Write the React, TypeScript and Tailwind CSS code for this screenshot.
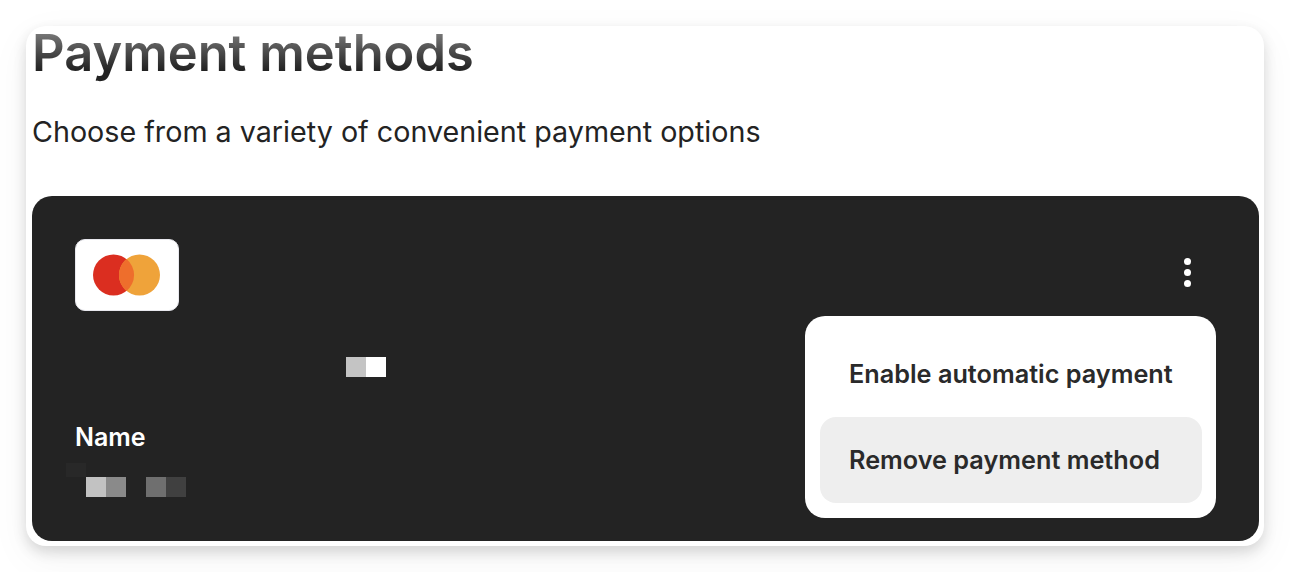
export default function App() {
  return (
    <div className="h-[572px] w-[1290px] overflow-hidden bg-white pt-[26px] pl-[26px] font-['Inter',sans-serif]">
      <div className="h-[520px] w-[1238px] rounded-[20px] bg-white pr-[5px] pb-[5px] pl-[6px] shadow-[0_6px_14px_rgba(0,0,0,0.14),0_12px_40px_rgba(0,0,0,0.05)]">
        <h1 className="h-[56px] w-fit bg-gradient-to-b from-[#8a8a8a] to-[#222222] to-[80%] bg-clip-text text-[50.6px] leading-[54px] font-semibold text-transparent">
          Payment methods
        </h1>
        <p className="mt-[32px] text-[28.7px] leading-[36px] text-[#232323]">
          Choose from a variety of convenient payment options
        </p>
        <div className="relative mt-[46px] h-[345px] rounded-[20px] bg-[#232323] pt-[43px] pl-[43px]">
          <div className="flex h-[72px] w-[104px] items-center rounded-[10px] border border-[#e8e8ee] bg-white pl-[17px]">
            <svg width="68" height="42" viewBox="0 0 68 42">
              <circle cx="20.5" cy="21" r="20.5" fill="#db2e20" />
              <circle cx="46.5" cy="21" r="20.5" fill="#efa33a" />
              <path d="M33.5 5.1a20.5 20.5 0 0 1 0 31.8a20.5 20.5 0 0 1 0-31.8z" fill="#ee6e2c" />
            </svg>
          </div>
          <div className="absolute top-[161px] left-[314px] flex">
            <div className="h-[20px] w-[20px] bg-[#c4c4c4]" />
            <div className="h-[20px] w-[20px] bg-white" />
          </div>
          <div className="mt-[110px] text-[25px] leading-[32px] font-semibold text-white">Name</div>
          <div className="absolute top-[267px] left-[34px] h-[14px] w-[20px] bg-[#282828]" />
          <div className="absolute top-[281px] left-[54px] flex">
            <div className="h-[20px] w-[20px] bg-[#c2c2c2]" />
            <div className="h-[20px] w-[20px] bg-[#8a8a8a]" />
            <div className="ml-[20px] h-[20px] w-[20px] bg-[#6f6f6f]" />
            <div className="h-[20px] w-[20px] bg-[#404040]" />
          </div>
          <div className="absolute top-[62px] left-[1152px] flex flex-col gap-[3.8px]">
            <div className="h-[7px] w-[7px] rounded-full bg-white" />
            <div className="h-[7px] w-[7px] rounded-full bg-white" />
            <div className="h-[7px] w-[7px] rounded-full bg-white" />
          </div>
          <div className="absolute top-[120px] left-[773px] h-[202px] w-[411px] rounded-[20px] bg-white pt-[15px] pr-[14px] pl-[15px] text-[25.25px] leading-[32px] font-semibold text-[#2a2a2a]">
            <div className="flex h-[86px] items-center pl-[29px]">Enable automatic payment</div>
            <div className="flex h-[86px] items-center rounded-[16px] bg-[#eeeeee] pl-[29px]">Remove payment method</div>
          </div>
        </div>
      </div>
    </div>
  );
}
